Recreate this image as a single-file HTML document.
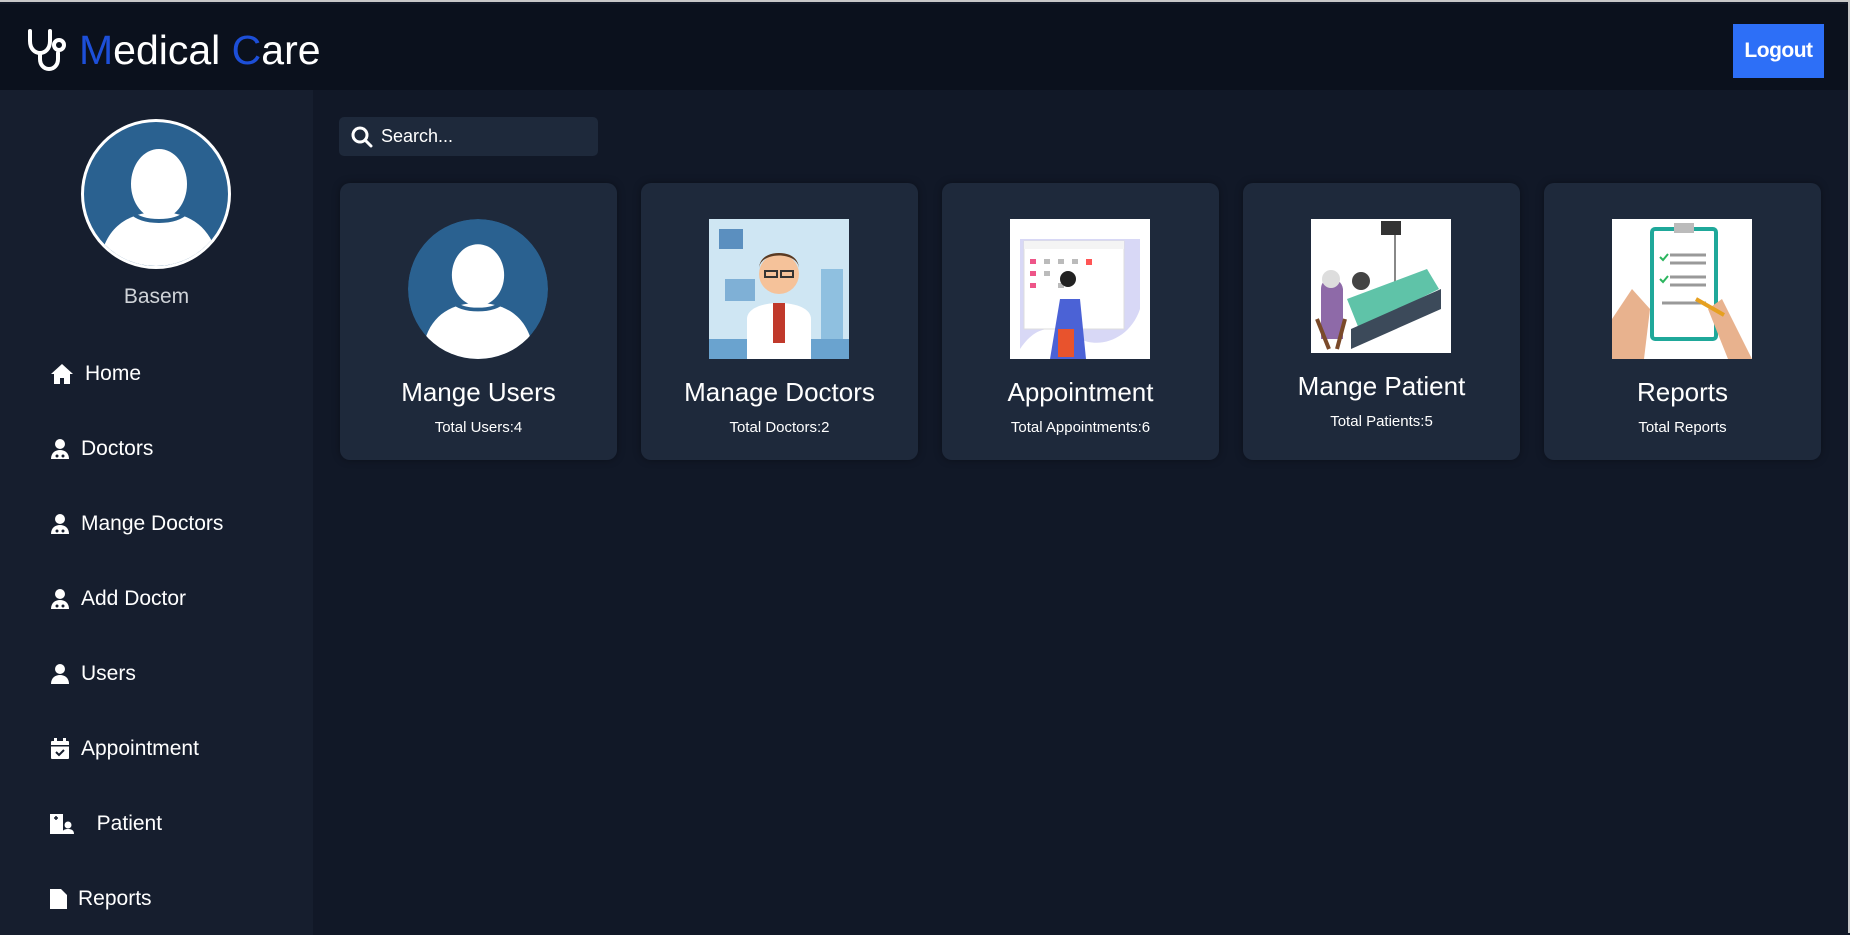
<!DOCTYPE html>
<html><head><meta charset="utf-8"><style>
*{margin:0;padding:0;box-sizing:border-box}
body{width:1850px;height:933px;overflow:hidden;background:#111827;font-family:"Liberation Sans",sans-serif;color:#fff;position:relative;border-top:2px solid #c8c8c8;border-right:2px solid #c8c8c8}
.hdr{position:absolute;left:0;top:2px;width:1848px;height:86px;background:#0b111d}
.logo{position:absolute;left:79px;top:23px;font-size:41px;letter-spacing:0px}
.logo b{font-weight:normal;color:#1d4fd8}
.btn{position:absolute;left:1733px;top:20px;width:91px;height:54px;background:#2d6ff7;font-size:21px;font-weight:bold;display:flex;align-items:center;justify-content:center;letter-spacing:-0.5px}
.side{position:absolute;left:0;top:88px;width:313px;height:845px;background:#161e2e}
.av{position:absolute;left:81px;top:118px;width:150px;height:150px;border-radius:50%;border:3px solid #fff;overflow:hidden;background:#2a6190}
.name{position:absolute;left:0;width:313px;top:284px;text-align:center;font-size:21px;color:#cfd3d8}
.nav{position:absolute;left:50px;font-size:21px;display:flex;align-items:center}
.nav svg{margin-right:11px}
.search{position:absolute;left:339px;top:115px;width:259px;height:39px;background:#1e293b;border-radius:5px;font-size:18px;display:flex;align-items:center;padding-left:12px}
.card{position:absolute;top:181px;width:277px;height:277px;background:#1e293b;border-radius:10px;box-shadow:0 0 8px rgba(0,0,0,.35);text-align:center}
.card .img{position:absolute;left:68px;top:36px;width:140px;height:140px;background:#fff;overflow:hidden}
.card .t{position:absolute;left:0;width:100%;top:194px;font-size:26px}
.card .s{position:absolute;left:0;width:100%;top:236px;font-size:15px}
</style></head><body>
<div class="hdr">
<svg style="position:absolute;left:26px;top:24px" width="44" height="44" viewBox="0 0 44 44" fill="none" stroke="#fff" stroke-width="4" stroke-linecap="round"><path d="M4 3v10c0 8 5 12 10 12s10-4 10-12V3"/><path d="M14 25v6c0 6 4 10 9 10s9-4 9-10v-6"/><circle cx="33" cy="17" r="5"/></svg>
<div class="logo"><b>M</b>edical <b>C</b>are</div>
<div class="btn">Logout</div>
</div>
<div class="side">
<div class="av" style="top:29px"><svg width="150" height="150" viewBox="0 0 150 150"><ellipse cx="75" cy="62" rx="28" ry="35" fill="#fff"/><path d="M18 130c8-28 30-40 57-40s49 12 57 40v30H18z" fill="#fff"/><path d="M47 90c8 8 20 9 28 9s20-1 28-9" stroke="#2a6190" stroke-width="4" fill="none"/></svg></div>
<div class="name" style="top:195px">Basem</div>
</div>
<svg width="0" height="0" style="position:absolute"><defs>
<g id="doc"><circle cx="10" cy="6" r="5" fill="#fff"/><path d="M1 21c0-6 4-9 9-9s9 3 9 9z" fill="#fff"/><circle cx="7" cy="18" r="1.5" fill="#161e2e"/><circle cx="13" cy="18" r="1.5" fill="#161e2e"/></g>
</defs></svg>
<div class="nav" style="top:360px"><svg width="24" height="22" viewBox="0 0 24 22"><path d="M12 1L1 11h3v10h6v-6h4v6h6V11h3z" fill="#fff"/></svg>Home</div>
<div class="nav" style="top:435px"><svg width="20" height="22"><use href="#doc"/></svg>Doctors</div>
<div class="nav" style="top:510px"><svg width="20" height="22"><use href="#doc"/></svg>Mange Doctors</div>
<div class="nav" style="top:585px"><svg width="20" height="22"><use href="#doc"/></svg>Add Doctor</div>
<div class="nav" style="top:660px"><svg width="20" height="22" viewBox="0 0 20 22"><circle cx="10" cy="6" r="5" fill="#fff"/><path d="M1 21c0-6 4-9 9-9s9 3 9 9z" fill="#fff"/></svg>Users</div>
<div class="nav" style="top:735px"><svg width="20" height="22" viewBox="0 0 20 22"><rect x="1" y="3" width="18" height="18" rx="1" fill="#fff"/><rect x="4" y="0" width="3" height="5" fill="#fff"/><rect x="13" y="0" width="3" height="5" fill="#fff"/><rect x="1" y="7" width="18" height="1.5" fill="#161e2e"/><path d="M6 14l3 3 5-5" stroke="#161e2e" stroke-width="2" fill="none"/></svg>Appointment</div>
<div class="nav" style="top:810px"><svg width="24" height="22" viewBox="0 0 24 22"><rect x="0" y="1" width="13" height="20" fill="#fff"/><path d="M4 5h4M6 3v4" stroke="#161e2e" stroke-width="1.5"/><circle cx="18" cy="12" r="3.5" fill="#fff"/><path d="M12 21c0-4 3-5 6-5s6 1 6 5z" fill="#fff"/></svg>&nbsp;&nbsp;Patient</div>
<div class="nav" style="top:885px"><svg width="17" height="22" viewBox="0 0 17 22"><path d="M0 1h11l6 6v14H0z" fill="#fff"/></svg>Reports</div>

<div class="search"><svg width="22" height="22" viewBox="0 0 22 22" fill="none" stroke="#fff" stroke-width="3"><circle cx="9" cy="9" r="7"/><path d="M14 14l6 6" stroke-linecap="round"/></svg><span style="margin-left:8px">Search...</span></div>

<div class="card" style="left:340px"><div class="img" style="background:transparent;border-radius:50%;overflow:hidden"><svg width="140" height="140" viewBox="0 0 150 150"><circle cx="75" cy="75" r="75" fill="#2a6190"/><ellipse cx="75" cy="60" rx="28" ry="33" fill="#fff"/><path d="M18 130c8-28 30-40 57-40s49 12 57 40v30H18z" fill="#fff"/><path d="M47 88c8 8 20 9 28 9s20-1 28-9" stroke="#2a6190" stroke-width="4" fill="none"/></svg></div><div class="t">Mange Users</div><div class="s">Total Users:4</div></div>

<div class="card" style="left:641px"><div class="img" style="background:#cfe6f3"><svg width="140" height="140" viewBox="0 0 140 140"><rect x="0" y="120" width="140" height="20" fill="#6aa3cf"/><rect x="10" y="10" width="24" height="20" fill="#5b8fbf"/><rect x="16" y="60" width="30" height="22" fill="#7fb0d6"/><rect x="112" y="50" width="22" height="70" fill="#8fc0e0"/><path d="M38 140v-40c0-10 14-16 32-16s32 6 32 16v40z" fill="#fff"/><rect x="64" y="84" width="12" height="40" fill="#c0392b"/><circle cx="70" cy="55" r="20" fill="#f5c29a"/><path d="M50 50c0-18 40-18 40 0 0-10-8-16-20-16s-20 6-20 16z" fill="#5a3a22"/><rect x="56" y="52" width="12" height="6" fill="none" stroke="#333" stroke-width="2"/><rect x="72" y="52" width="12" height="6" fill="none" stroke="#333" stroke-width="2"/></svg></div><div class="t">Manage Doctors</div><div class="s">Total Doctors:2</div></div>

<div class="card" style="left:942px"><div class="img"><svg width="140" height="140" viewBox="0 0 140 140"><path d="M10 130c20-30 40-20 60-10s50 0 60-30V20H10z" fill="#d8d8f6"/><rect x="14" y="22" width="100" height="88" fill="#fff" stroke="#ddd"/><rect x="14" y="22" width="100" height="8" fill="#f4f4f4"/><g fill="#e58">
<rect x="20" y="40" width="6" height="5"/><rect x="20" y="52" width="6" height="5"/><rect x="20" y="64" width="6" height="5"/></g><g fill="#bbb"><rect x="34" y="40" width="6" height="5"/><rect x="48" y="40" width="6" height="5"/><rect x="62" y="40" width="6" height="5"/><rect x="34" y="52" width="6" height="5"/><rect x="48" y="64" width="6" height="5"/></g><rect x="76" y="40" width="6" height="6" fill="#f55"/><path d="M40 140l10-60h20l6 60z" fill="#4b62d6"/><circle cx="58" cy="60" r="8" fill="#222"/><rect x="48" y="110" width="16" height="28" fill="#e8532d"/></svg></div><div class="t">Appointment</div><div class="s">Total Appointments:6</div></div>

<div class="card" style="left:1243px"><div class="img" style="height:134px"><svg width="140" height="134" viewBox="0 0 140 134"><rect x="70" y="2" width="20" height="14" fill="#333"/><line x1="84" y1="16" x2="84" y2="80" stroke="#888" stroke-width="2"/><path d="M36 80l80-30 12 20-80 40z" fill="#5fc3a8"/><path d="M40 110l90-40v20l-90 40z" fill="#3c4a5a"/><circle cx="50" cy="62" r="9" fill="#444"/><path d="M10 70c0-14 20-14 22 0v50H10z" fill="#8e6aa8"/><circle cx="20" cy="60" r="9" fill="#ddd"/><path d="M6 100l12 30M34 100l-8 30" stroke="#7a4a2a" stroke-width="4"/></svg></div><div class="t" style="top:188px">Mange Patient</div><div class="s" style="top:230px">Total Patients:5</div></div>

<div class="card" style="left:1544px"><div class="img"><svg width="140" height="140" viewBox="0 0 140 140"><rect x="40" y="10" width="64" height="110" rx="3" fill="#fff" stroke="#1fa89a" stroke-width="4"/><rect x="62" y="4" width="20" height="10" fill="#bbb"/><g stroke="#999" stroke-width="3"><line x1="58" y1="36" x2="94" y2="36"/><line x1="58" y1="44" x2="94" y2="44"/><line x1="58" y1="58" x2="94" y2="58"/><line x1="58" y1="66" x2="94" y2="66"/><line x1="50" y1="84" x2="94" y2="84"/></g><path d="M48 38l3 3 5-6M48 60l3 3 5-6" stroke="#2bb55e" stroke-width="2" fill="none"/><path d="M0 140l0-40 20-30 18 20-6 50z" fill="#e8b28e"/><path d="M140 140l-30-60-14 10 20 50z" fill="#e8b28e"/><line x1="84" y1="80" x2="112" y2="96" stroke="#e6a020" stroke-width="4"/></svg></div><div class="t">Reports</div><div class="s">Total Reports</div></div>
</body></html>
